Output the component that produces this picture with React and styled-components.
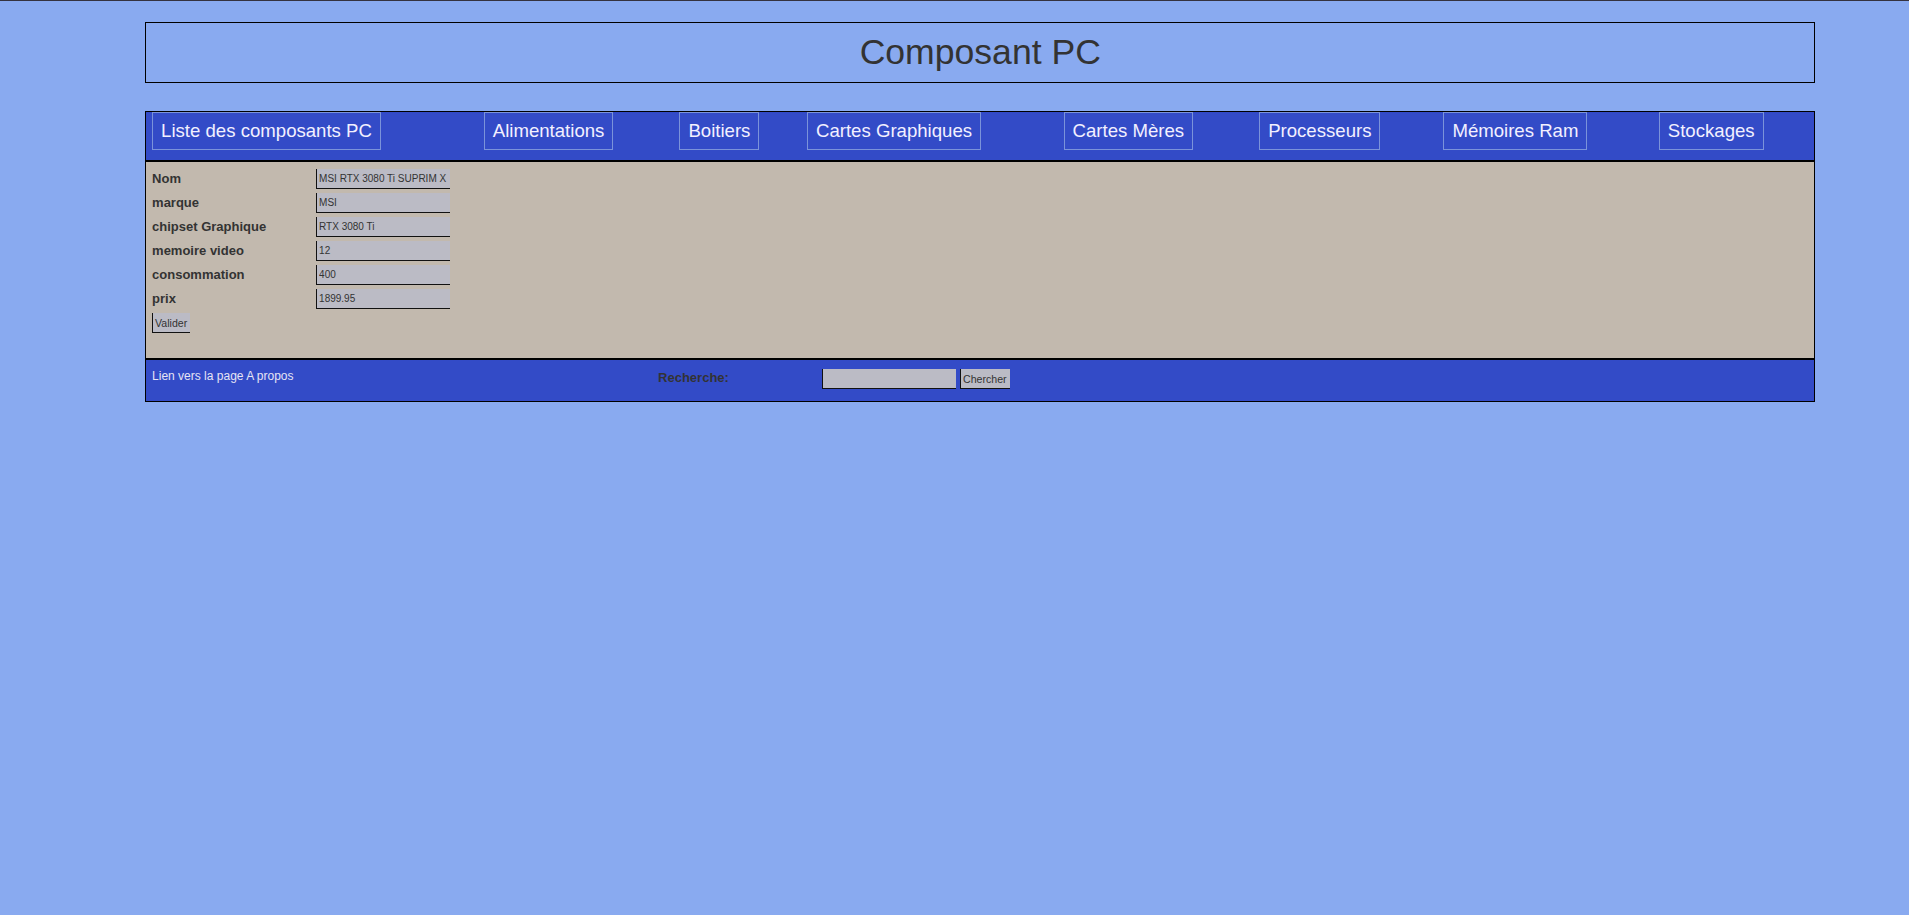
import React from 'react';
import styled, {createGlobalStyle} from 'styled-components';

const GlobalStyle = createGlobalStyle`
    body {
        margin: 0;
        background-color: #89aaf0;
        border-top: 1px solid #34323f;
        font-family: "Liberation Sans", Arial, sans-serif;
        color: #333;
    }
`

const Page = styled.div`
    width: 87.5%;
    margin-left: 7.6%;
    padding-top: 21px;
`
const Header = styled.header`
    border: 1px solid #000;
    height: 59px;
    display: flex;
    justify-content: center;
    align-items: center;
`
const Title = styled.h1`
    margin: 0;
    font-size: 35.6px;
    font-weight: normal;
    color: #333;
`
const Nav = styled.nav`
    margin-top: 28px;
    background-color: #334bc7;
    border: 1px solid #000;
    padding-bottom: 10px;
`
const NavList = styled.ul`
    display: table;
    width: 100%;
    list-style: none;
    margin: 0;
    padding: 0;
`
const NavItem = styled.li`
    display: table-cell;
    padding: 0 7px 0 6px;
    line-height: 0;
    white-space: nowrap;
`
const NavLink = styled.a`
    display: inline-block;
    vertical-align: top;
    padding: 7px 8px;
    line-height: 22px;
    font-size: 18.6px;
    color: #f2f0ff;
    text-decoration: none;
    border: 1px solid #7b93da;
`
const Panel = styled.main`
    background-color: #c2b9ae;
    border: 1px solid #000;
    padding: 5px 6px 25px;
`
const Row = styled.div`
    display: flex;
    align-items: flex-start;
    height: 22px;
    margin-bottom: 2px;
`
const Label = styled.label`
    width: 164px;
    flex-shrink: 0;
    padding-top: ${(props) => props.$offset || '0'};
    font-size: 13px;
    font-weight: bold;
    line-height: 18px;
    color: #333;
`
const Input = styled.input`
    box-sizing: border-box;
    width: 134px;
    height: 20px;
    margin: ${(props) => props.$flat ? '0' : '2px 0 0'};
    padding: 0 2px;
    background-color: #bbbbc5;
    border-style: solid;
    border-width: 0 0 1px 1px;
    border-color: #111;
    font-family: "Liberation Sans", Arial, sans-serif;
    font-size: 10px;
    color: #333;
    outline: none;
`
const Button = styled.button`
    box-sizing: border-box;
    height: 20px;
    width: ${(props) => props.$width};
    margin: ${(props) => props.$margin || '0'};
    padding: 0 2px;
    background-color: #bbbbc5;
    border-style: solid;
    border-width: 0 0 1px 1px;
    border-color: #111;
    font-family: "Liberation Sans", Arial, sans-serif;
    font-size: 10.6px;
    color: #333;
    text-align: left;
`
const Footer = styled.footer`
    display: flex;
    align-items: flex-start;
    height: 32px;
    background-color: #334bc7;
    border: 1px solid #000;
    padding: 9px 6px 0;
`
const FooterLink = styled.a`
    width: 506px;
    font-size: 12px;
    line-height: 14px;
    color: #e6e4f4;
    text-decoration: none;
`
const SearchForm = styled.form`
    display: flex;
    align-items: flex-start;
`

const links = [
    'Liste des composants PC',
    'Alimentations',
    'Boitiers',
    'Cartes Graphiques',
    'Cartes Mères',
    'Processeurs',
    'Mémoires Ram',
    'Stockages',
];

const fields = [
    ['Nom', 'MSI RTX 3080 Ti SUPRIM X'],
    ['marque', 'MSI'],
    ['chipset Graphique', 'RTX 3080 Ti'],
    ['memoire video', '12'],
    ['consommation', '400'],
    ['prix', '1899.95'],
];

const App = () => {
    return (
        <>
            <GlobalStyle />
            <Page>
                <Header>
                    <Title>Composant PC</Title>
                </Header>
                <Nav>
                    <NavList>
                        {links.map((l) => (
                            <NavItem key={l}><NavLink href="#">{l}</NavLink></NavItem>
                        ))}
                    </NavList>
                </Nav>
                <Panel>
                    <form onSubmit={(e) => e.preventDefault()}>
                        {fields.map(([name, value]) => (
                            <Row key={name}>
                                <Label $offset="3px">{name}</Label>
                                <Input defaultValue={value} />
                            </Row>
                        ))}
                        <Button $width="38px" $margin="2px 0 0">Valider</Button>
                    </form>
                </Panel>
                <Footer>
                    <FooterLink href="#">Lien vers la page A propos</FooterLink>
                    <SearchForm onSubmit={(e) => e.preventDefault()}>
                        <Label>Recherche:</Label>
                        <Input $flat />
                        <Button $width="50px" $margin="0 0 0 4px">Chercher</Button>
                    </SearchForm>
                </Footer>
            </Page>
        </>
    );
};

export default App;
